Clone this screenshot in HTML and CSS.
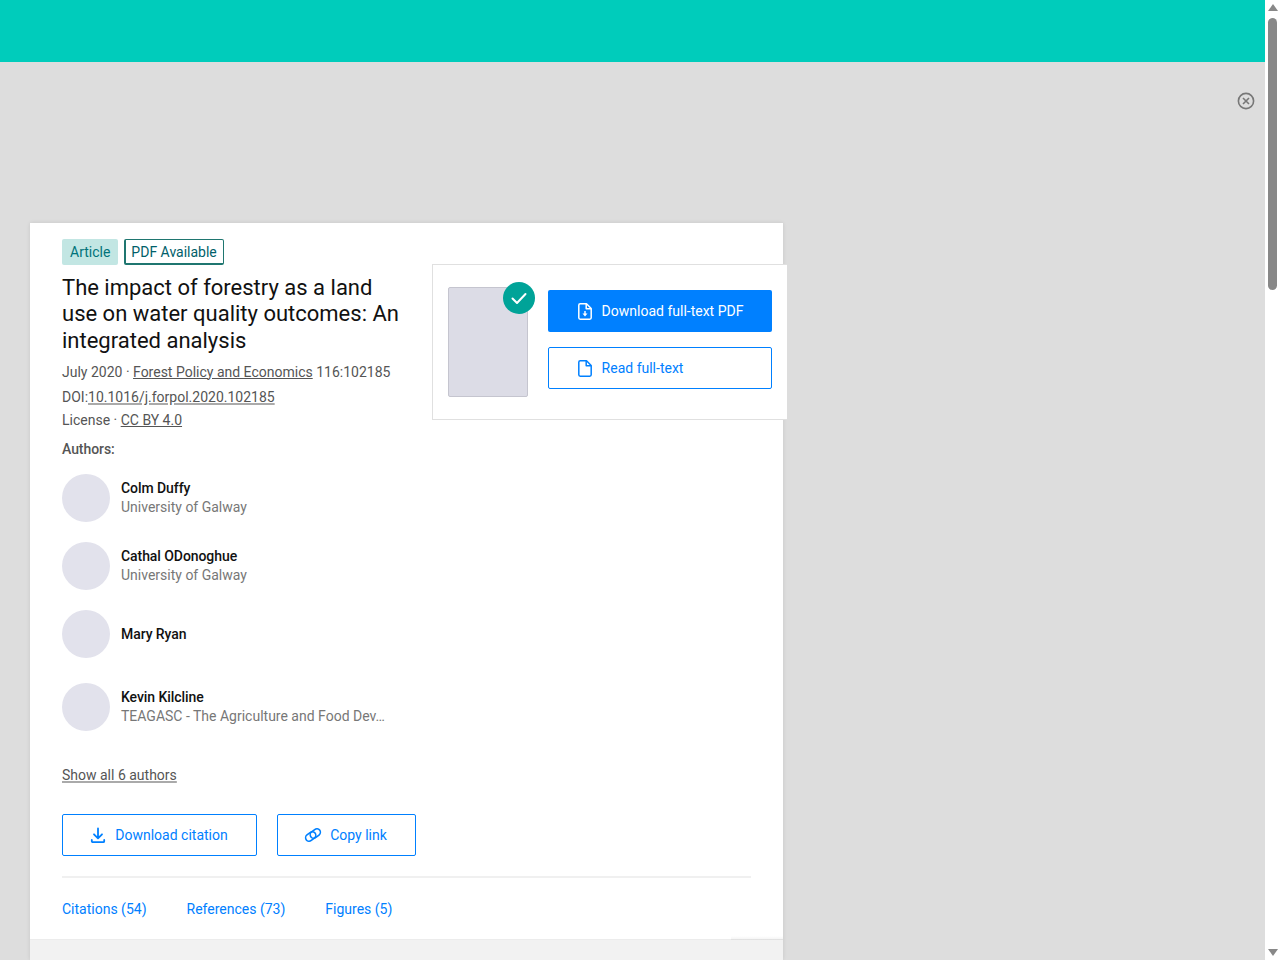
FILE: index.html
```html
<!DOCTYPE html>
<html lang="en">
<head>
<meta charset="utf-8">
<title>The impact of forestry as a land use on water quality outcomes</title>
<link rel="stylesheet" href="styles.css">
</head>
<body>
<div class="app">
  <main class="page">
    <header class="topbar"></header>
    <div class="backdrop">
      <div class="close-row">
        <svg class="close-icon" width="18" height="18" viewBox="0 0 18 18" fill="none" stroke="#777" stroke-width="1.6"><circle cx="9" cy="9" r="7.6"/><path d="M6 6l6 6M12 6l-6 6"/></svg>
      </div>
      <article class="card">
        <div class="card-body">
          <div class="badges">
            <span class="badge badge-fill">Article</span>
            <span class="badge badge-line">PDF Available</span>
          </div>
          <h1 class="title">The impact of forestry as a land use on water quality outcomes: An integrated analysis</h1>
          <p class="meta meta-first">July 2020 · <a href="#">Forest Policy and Economics</a> 116:102185</p>
          <p class="meta meta-doi">DOI:<a href="#" class="thick">10.1016/j.forpol.2020.102185</a></p>
          <p class="meta meta-license">License · <a href="#">CC BY 4.0</a></p>
          <h2 class="authors-label">Authors:</h2>
          <ul class="authors">
            <li class="author a1"><span class="avatar"></span><div class="who"><div class="name">Colm Duffy</div><div class="inst">University of Galway</div></div></li>
            <li class="author a2"><span class="avatar"></span><div class="who"><div class="name">Cathal ODonoghue</div><div class="inst">University of Galway</div></div></li>
            <li class="author a3"><span class="avatar"></span><div class="who"><div class="name">Mary Ryan</div></div></li>
            <li class="author a4"><span class="avatar"></span><div class="who"><div class="name">Kevin Kilcline</div><div class="inst">TEAGASC - The Agriculture and Food Dev…</div></div></li>
          </ul>
          <a href="#" class="show-all thick">Show all 6 authors</a>
          <div class="actions">
            <a href="#" class="btn btn-line cite">
              <svg width="18" height="18" viewBox="0 0 18 18" fill="none" stroke="#0080ff" stroke-width="1.8" stroke-linecap="round" stroke-linejoin="round"><path d="M9 2.500v9.500M5 8.300l4 4 4-4"/><path d="M2.800 14v1.200a1 1 0 0 0 1 1h10.400a1 1 0 0 0 1-1V14"/></svg>
              Download citation
            </a>
            <a href="#" class="btn btn-line copy">
              <svg width="18" height="16" viewBox="0 0 18 16" fill="none" stroke="#0080ff" stroke-width="1.600"><rect x="1.200" y="6" width="11" height="7" rx="3.500" transform="rotate(-38 6.700 9.500)"/><rect x="5.800" y="3" width="11" height="7" rx="3.500" transform="rotate(-38 11.300 6.500)"/></svg>
              Copy link
            </a>
          </div>
          <nav class="tabs">
            <a href="#">Citations (54)</a>
            <a href="#">References (73)</a>
            <a href="#">Figures (5)</a>
          </nav>
        </div>
        <div class="card-foot"></div>
      </article>
      <aside class="popup">
        <div class="thumb">
          <span class="check"><svg width="18" height="18" viewBox="0 0 18 18" fill="none" stroke="#fff" stroke-width="2" stroke-linecap="round" stroke-linejoin="round"><path d="M2.500 9.500l4.500 4.500 8.500-9"/></svg></span>
        </div>
        <div class="popup-actions">
          <a href="#" class="btn btn-solid wide">
            <svg width="14" height="17" viewBox="0 0 14 17" fill="none" stroke="#fff" stroke-width="1.500" stroke-linejoin="round"><path d="M2.200.8h6.300l4.700 4.700v9.300a1.400 1.400 0 0 1-1.400 1.400H2.200A1.400 1.400 0 0 1 .8 14.800V2.200A1.400 1.400 0 0 1 2.200.8z"/><path d="M8.200 1v4.700H13"/><path d="M7 8v3" stroke-width="1.400"/><path d="M4.500 10.500h5L7 13.500z" fill="#fff" stroke="none"/></svg>
            Download full-text PDF
          </a>
          <a href="#" class="btn btn-line wide">
            <svg width="14" height="17" viewBox="0 0 14 17" fill="none" stroke="#0080ff" stroke-width="1.500" stroke-linejoin="round"><path d="M2.200.8h6.300l4.700 4.700v9.300a1.400 1.400 0 0 1-1.400 1.400H2.200A1.400 1.400 0 0 1 .8 14.800V2.200A1.400 1.400 0 0 1 2.200.8z"/><path d="M8.200 1v4.700H13"/></svg>
            Read full-text
          </a>
        </div>
      </aside>
    </div>
  </main>
  <div class="scrollbar">
    <span class="arrow up"></span>
    <span class="thumb-bar"></span>
    <span class="arrow down"></span>
  </div>
</div>
</body>
</html>
```

FILE: styles.css
```css
* { box-sizing: border-box; }
html, body { margin: 0; height: 960px; overflow: hidden; }
body { font-family: Roboto, "Liberation Sans", sans-serif; font-size: 14px; color: #555; }
a { color: inherit; }
.app { display: flex; height: 960px; }
.page { flex: 1; min-width: 0; display: flex; flex-direction: column; background: #ddd; }
.topbar { height: 62px; background: #00ccbb; flex: none; }
.backdrop { position: relative; flex: 1; min-height: 0; padding: 30px 10px 0 30px; display: flex; flex-direction: column; overflow: hidden; }
.close-row { display: flex; justify-content: flex-end; height: 131px; flex: none; }
.close-icon { display: block; }
.card { width: 753px; flex: 1; min-height: 0; display: flex; flex-direction: column; background: #fff; box-shadow: 0 0 4px rgba(0,0,0,.1); }
.card-body { padding: 16px 32px 0; flex: 1; min-height: 0; }
.card-foot { position: relative; height: 21px; flex: none; background: #f2f2f2; border-top: 1px solid #ececec; }
.card-foot::before { content: ""; position: absolute; left: 701px; right: 0; top: -4px; height: 4px; background: linear-gradient(to bottom, rgba(0,0,0,0), rgba(0,0,0,.05)); }
.badges { display: flex; gap: 6px; height: 26px; }
.badge { display: flex; align-items: center; border-radius: 2px; line-height: 1; font-size: 14px; color: #00737a; }
.badge-fill { background: #c2e6e3; padding: 0 8px; }
.badge-line { border: solid #1f7670; border-width: 1px 1px 2px 2px; padding: 0 6px 0 5px; color: #00606a; }
.title { width: 345px; margin: 10px 0 0; font-size: 22px; line-height: 26.400px; font-weight: 400; color: #111; }
.meta { margin: 0; font-size: 14px; line-height: 23.500px; color: #555; }
.meta-first { margin-top: 6.300px; }
.meta-doi { margin-top: 2px; }
.meta-license { margin-top: -1px; }
.thick { text-decoration-thickness: 2px; text-decoration-color: #aaa; }
.authors-label { margin: 7px 0 0; font-size: 14px; line-height: 20px; font-weight: 500; color: #555; letter-spacing: -.07px; }
.authors { list-style: none; margin: 0; padding: 0; }
.author { display: flex; align-items: center; gap: 11px; height: 48px; }
.a1 { margin-top: 15px; }
.a2 { margin-top: 20px; }
.a3 { margin-top: 20px; }
.a4 { margin-top: 25px; }
.avatar { width: 48px; height: 48px; border-radius: 50%; background: #e2e2ec; flex: none; }
.who { min-width: 0; }
.name { font-size: 14px; line-height: 19px; font-weight: 500; color: #111; letter-spacing: -.07px; }
.inst { font-size: 14px; line-height: 19px; color: #777; white-space: nowrap; }
.show-all { display: inline-block; margin-top: 34px; font-size: 14px; line-height: 20px; color: #555; }
.actions { display: flex; gap: 20px; margin-top: 29px; }
.btn { display: flex; align-items: center; justify-content: center; gap: 8px; height: 42px; border-radius: 2px; font-size: 14px; color: #0080ff; text-decoration: none; }
.btn-line { background: #fff; border: 1px solid #0080ff; }
.btn-solid { background: #0080ff; color: #fff; }
.cite { width: 195px; padding-right: 2px; }
.copy { width: 139px; padding-right: 2px; }
.tabs { display: flex; gap: 40px; margin-top: 20px; padding-top: 21px; border-top: 2px solid #f0f0f0; height: 44px; line-height: 20px; color: #0080ff; }
.tabs a { text-decoration: none; }
.popup { position: absolute; left: 432px; top: 202px; width: 355px; height: 156px; display: flex; align-items: flex-start; gap: 20px; padding: 22px 15px 0; background: #fff; border: 1px solid #e0e0e0; border-right: 0; }
.thumb { position: relative; width: 80px; height: 110px; background: #dcdce6; border: 1px solid #c5c5cf; border-radius: 2px; flex: none; }
.check { position: absolute; top: -6px; right: -8px; width: 32px; height: 32px; border-radius: 50%; background: #00a398; display: flex; align-items: center; justify-content: center; }
.popup-actions { display: flex; flex-direction: column; gap: 15px; padding-top: 3px; flex: 1; }
.wide { width: 224px; justify-content: flex-start; gap: 9.600px; padding-left: 30px; }
.wide.btn-line { padding-left: 29px; }
.scrollbar { width: 15px; flex: none; background: #fff; display: flex; flex-direction: column; align-items: center; padding: 4px 0; }
.arrow { width: 0; height: 0; border-left: 5px solid transparent; border-right: 5px solid transparent; flex: none; }
.up { border-bottom: 7px solid #888; }
.down { border-top: 7px solid #888; margin-top: auto; }
.thumb-bar { width: 9px; height: 272px; margin-top: 7px; background: #888; border-radius: 5px; }
```
